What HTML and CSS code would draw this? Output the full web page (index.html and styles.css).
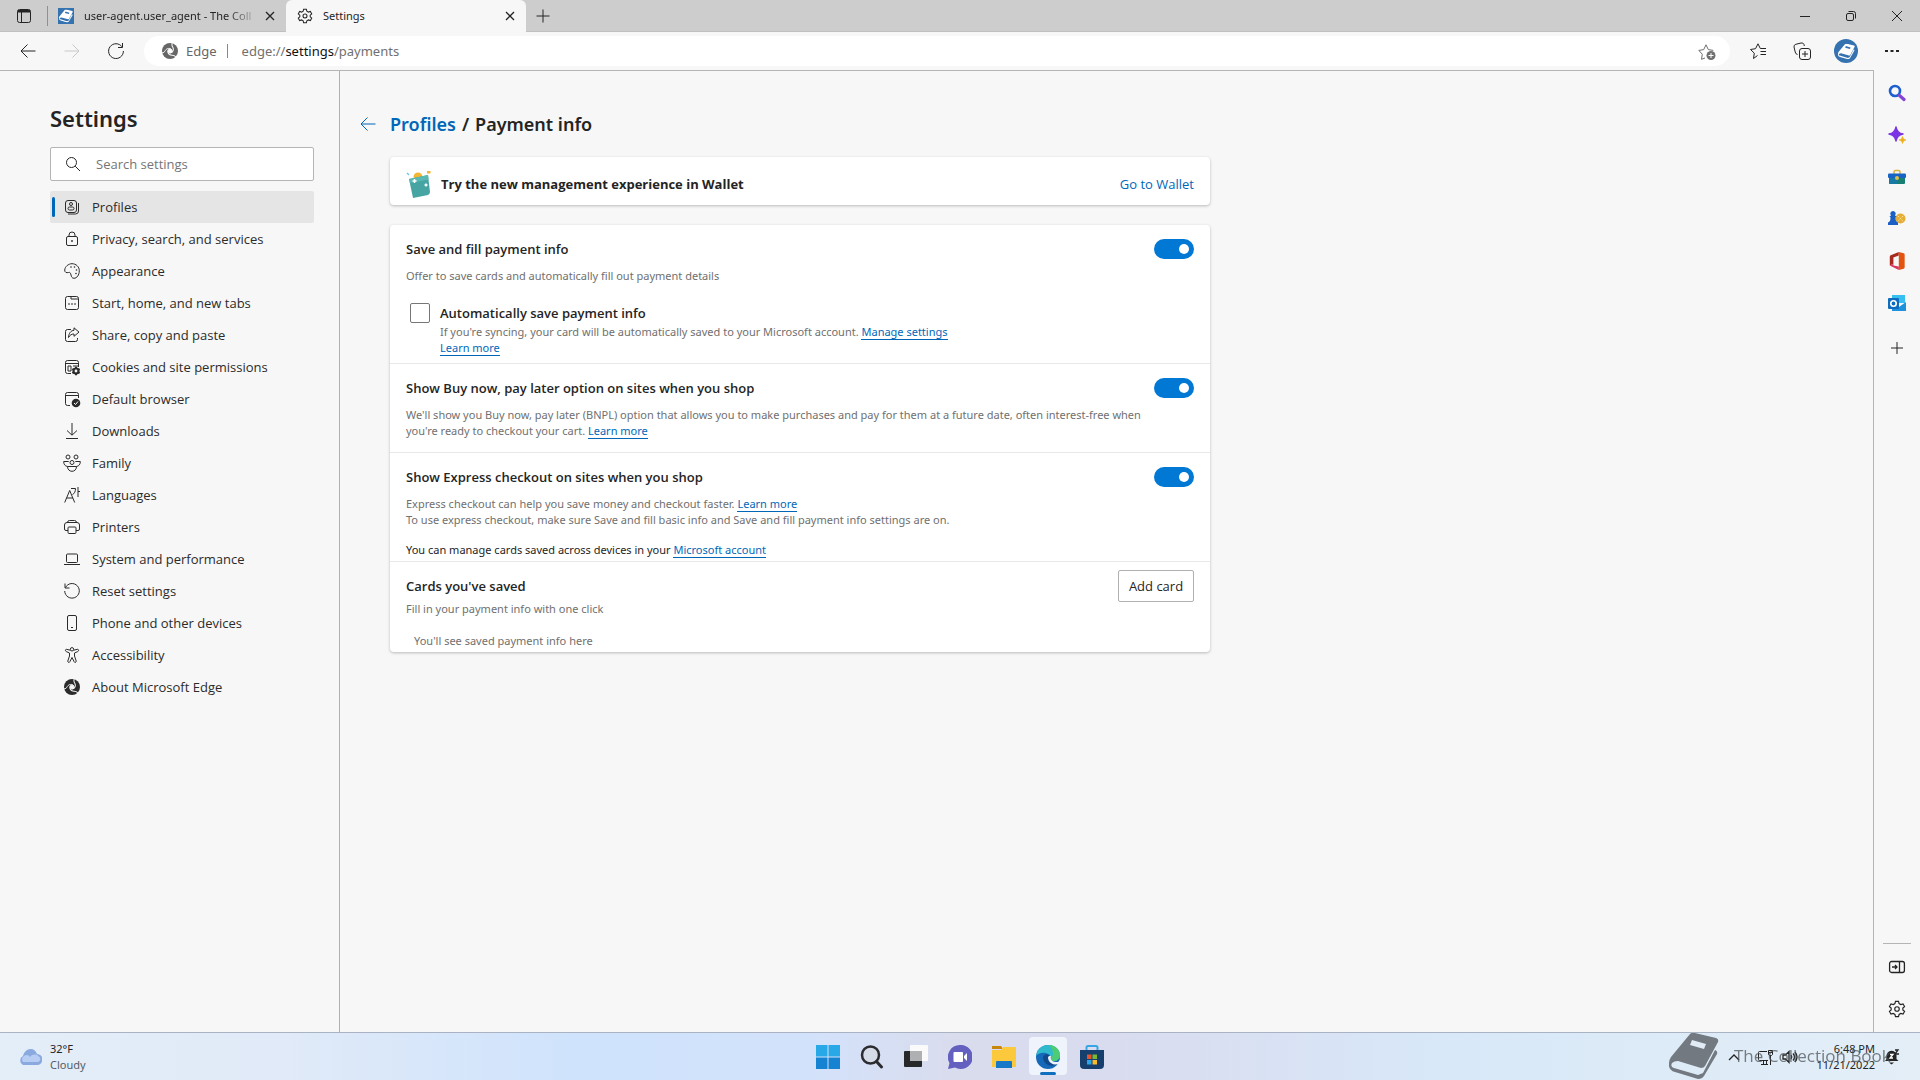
FILE: index.html
```html
<!DOCTYPE html>
<html lang="en">
<head>
<meta charset="utf-8">
<title>Settings</title>
<link rel="stylesheet" href="styles.css">
</head>
<body>
<svg class="defs" aria-hidden="true">
  <defs>
    <symbol id="i-close" viewBox="0 0 16 16"><path d="M4 4l8 8M12 4l-8 8"/></symbol>
    <symbol id="i-plus" viewBox="0 0 16 16"><path d="M8 1.500v13M1.500 8h13"/></symbol>
    <symbol id="i-back" viewBox="0 0 16 16"><path d="M15.500 8H1M7.500 1.500L1 8l6.500 6.500"/></symbol>
    <symbol id="i-search" viewBox="0 0 16 16"><circle cx="6.500" cy="6.500" r="5"/><path d="M10.200 10.200L15 15"/></symbol>
    <symbol id="i-gear" viewBox="0 0 20 20"><path d="M8.300 1.500h3.400l.6 2.500 1.900 1.100 2.500-.8 1.700 3-1.900 1.700v2l1.900 1.700-1.700 3-2.500-.8-1.900 1.100-.6 2.500H8.300l-.6-2.500-1.900-1.100-2.500.8-1.700-3L3.500 11V9L1.600 7.300l1.700-3 2.500.8L7.700 4z"/><circle cx="10" cy="10" r="2.500"/></symbol>
    <symbol id="i-edge" viewBox="0 0 16 16"><circle class="fill" cx="8" cy="8" r="8"/><g class="cut"><circle cx="8" cy="8" r="2"/><path d="M9.600 6.600C8 4.800 5 5 3.400 7.400 2.600 9 1.500 9.800 0 10"/><path d="M9.600 6.600C8 4.800 5 5 3.400 7.400 2.600 9 1.500 9.800 0 10" transform="rotate(120 8 8)"/><path d="M9.600 6.600C8 4.800 5 5 3.400 7.400 2.600 9 1.500 9.800 0 10" transform="rotate(240 8 8)"/></g></symbol>
    <symbol id="i-book" viewBox="0 0 50 46"><path class="fill" d="M21 1q2-2 5-1l21 5q3 1 2 4L36 33q-1 2-4 2L9 28q-4 0-6 2-2 4 2 5l24 7 5-2 12-23q3 1 2 4L35 43q-2 3-6 3L6 39q-7-2-6-9 0-3 2-6z"/><path class="label" d="M23 7l14 4-2 5-14-4z"/></symbol>
  </defs>
</svg>

<header class="tabstrip">
  <button class="tab-actions" aria-label="Tab actions"><svg class="ico" viewBox="0 0 16 16"><rect x="1.500" y="1.500" width="13" height="13" rx="2"/><path d="M1.500 4h13M5.500 4v10.500" /><path d="M2 3h12" class="thick"/></svg></button>
  <div class="tab">
    <span class="favicon"><svg viewBox="0 0 50 46"><use href="#i-book"/></svg></span>
    <span class="tab-title fade">user-agent.user_agent - The Coll</span>
    <button class="tab-close" aria-label="Close tab"><svg class="ico dark"><use href="#i-close"/></svg></button>
  </div>
  <div class="tab active">
    <svg class="ico dark"><use href="#i-gear"/></svg>
    <span class="tab-title">Settings</span>
    <button class="tab-close" aria-label="Close tab"><svg class="ico dark"><use href="#i-close"/></svg></button>
  </div>
  <button class="new-tab" aria-label="New tab"><svg class="ico"><use href="#i-plus"/></svg></button>
  <div class="window-buttons">
    <button aria-label="Minimize"><svg class="ico" viewBox="0 0 16 16"><path d="M3 8.500h10"/></svg></button>
    <button aria-label="Restore"><svg class="ico" viewBox="0 0 16 16"><rect x="3.500" y="5.500" width="7" height="7" rx="1.500"/><path d="M5.500 3.500h5a2 2 0 0 1 2 2v5"/></svg></button>
    <button aria-label="Close"><svg class="ico" viewBox="0 0 16 16"><path d="M3 3l10 10M13 3L3 13"/></svg></button>
  </div>
</header>

<nav class="toolbar" aria-label="Browser toolbar">
  <button aria-label="Back"><svg class="ico"><use href="#i-back"/></svg></button>
  <button aria-label="Forward" disabled><svg class="ico flip"><use href="#i-back"/></svg></button>
  <button aria-label="Refresh"><svg class="ico large" viewBox="0 0 18 18"><path d="M15 4.800A7.400 7.400 0 1 0 16.400 9M15.500 1v4.500H11"/></svg></button>
  <div class="omnibox">
    <svg class="ico edge"><use href="#i-edge"/></svg>
    <span class="site">Edge</span>
    <span class="url">edge://<b>settings</b>/payments</span>
    <button aria-label="Add to favorites"><svg class="ico large soft" viewBox="0 0 18 18"><path d="M7 16l-3.500 1.300.8-5L.8 8.400l4.900-.8L8 2.800l2.300 4.800 5 .8"/><circle cx="13" cy="13.500" r="4.500" class="fill"/><path class="white" d="M13 11v5M10.500 13.500h5"/></svg></button>
  </div>
  <button aria-label="Favorites"><svg class="ico large" viewBox="0 0 18 18"><path d="M8.500 13.500l-4 3 .8-5.300L1.500 7.500l5-.8L9 1.800l2.300 4.700H17M11.500 9.500H17M11.500 12.500H17"/></svg></button>
  <button aria-label="Collections"><svg class="ico large" viewBox="0 0 18 18"><path d="M4.500 12.500A3 3 0 0 1 2.200 10L1 5a2.500 2.500 0 0 1 1.800-2.700L8 1a2.500 2.500 0 0 1 3 1.500l.3 1.500"/><rect x="6.500" y="6.500" width="11" height="11" rx="2.500"/><path d="M12 9v6M9 12h6"/></svg></button>
  <button class="avatar" aria-label="Profile"><svg viewBox="0 0 50 46"><use href="#i-book"/></svg></button>
  <button aria-label="Settings and more"><svg class="ico" viewBox="0 0 16 16"><path class="fill" d="M1 7h3v2H1zM6.500 7h3v2h-3zM12 7h3v2h-3z"/></svg></button>
</nav>

<div class="workspace">
  <div class="page">
    <aside class="nav">
      <h1>Settings</h1>
      <label class="searchbox"><svg class="ico"><use href="#i-search"/></svg><input type="text" placeholder="Search settings" aria-label="Search settings"></label>
      <ul>
        <li><a class="current" href="#profiles"><svg class="ico" viewBox="0 0 16 16"><rect x="1.500" y="1.500" width="11" height="12" rx="2.500"/><circle cx="7" cy="5" r="1.500"/><rect x="4" y="8" width="6" height="3" rx="1.500"/><path d="M14.500 4v8a3 3 0 0 1-3 3H4"/></svg>Profiles</a></li>
        <li><a href="#privacy"><svg class="ico" viewBox="0 0 16 16"><rect x="2.500" y="5.500" width="11" height="9" rx="1.500"/><path d="M5 5.500V4a3 3 0 0 1 6 0v1.500"/><circle cx="8" cy="10" r=".6"/></svg>Privacy, search, and services</a></li>
        <li><a href="#appearance"><svg class="ico" viewBox="0 0 16 16"><path d="M.7 7C1 3.500 4.500.7 8 .7c4 0 7.300 3 7.300 7 0 4.300-2.500 7.600-5.300 7.600-2 0-2.500-1.500-3-3.300-.4-2-1-3-2.500-2.500C2.500 10 .7 9.500.7 7z"/><g class="fill"><circle cx="7" cy="4" r=".8"/><circle cx="10.500" cy="4" r=".8"/><circle cx="12.500" cy="7" r=".8"/><circle cx="12" cy="10.500" r=".8"/></g></svg>Appearance</a></li>
        <li><a href="#start"><svg class="ico" viewBox="0 0 16 16"><rect x="1.500" y="1.500" width="13" height="13" rx="2"/><path d="M7 1.500V4h7.500M4 9h2M7 9h2M10 9h2"/></svg>Start, home, and new tabs</a></li>
        <li><a href="#share"><svg class="ico" viewBox="0 0 16 16"><path d="M7 2.500H3.500a2 2 0 0 0-2 2v8a2 2 0 0 0 2 2h8a2 2 0 0 0 2-2V11M10 .8l5 4.300-5 4.200V7C7.500 7 6 8 4.500 10.500 4.800 6 7 3.500 10 3.300z"/></svg>Share, copy and paste</a></li>
        <li><a href="#cookies"><svg class="ico" viewBox="0 0 16 16"><path d="M7 14.500H3.500a2 2 0 0 1-2-2v-9a2 2 0 0 1 2-2h9a2 2 0 0 1 2 2V8M1.500 4.500h13M4 7h3v5H4zM9 7h5"/><circle cx="12" cy="12" r="2.500" stroke-width="2.200"/><path d="M12 7.800v8.400M8.400 9.900l7.200 4.200M15.600 9.900l-7.200 4.200" stroke-dasharray="1.600 5.200" stroke-width="2"/></svg>Cookies and site permissions</a></li>
        <li><a href="#default"><svg class="ico" viewBox="0 0 16 16"><path d="M6 14.500H3.500a2 2 0 0 1-2-2v-9a2 2 0 0 1 2-2h9a2 2 0 0 1 2 2V7M1.500 4.500h13"/><circle class="fill" cx="12" cy="12" r="4.300"/><path class="white" d="M10 12l1.500 1.500 2.500-3"/></svg>Default browser</a></li>
        <li><a href="#downloads"><svg class="ico" viewBox="0 0 16 16"><path d="M8 0v12M3 7.500L8 12.200l5-4.700M2 15.500h12"/></svg>Downloads</a></li>
        <li><a href="#family"><svg class="ico wide" viewBox="0 0 18 18"><circle cx="5" cy="3" r="2"/><circle cx="13" cy="3" r="2"/><circle cx="9" cy="8.500" r="2"/><path d="M4.500 12.500C2 12 .7 10.500.7 7.500h5M13.500 12.500c2.500-.5 3.800-2 3.800-5h-5M4.500 12.500h9c0 3-2 4.800-4.500 4.800s-4.500-1.800-4.500-4.800z"/></svg>Family</a></li>
        <li><a href="#languages"><svg class="ico" viewBox="0 0 16 16"><path d="M.7 15.500l5-12 5 12M2.500 11h6.500M7 1.500h4.500c0 3-1 5-3 6M14 0v10M14 4.500h2"/></svg>Languages</a></li>
        <li><a href="#printers"><svg class="ico" viewBox="0 0 16 16"><path d="M4 11.500H2a1.500 1.500 0 0 1-1.500-1.500V6A2.500 2.500 0 0 1 3 3.500h10A2.500 2.500 0 0 1 15.500 6v4a1.500 1.500 0 0 1-1.500 1.500h-2M3.500 3.500A2 2 0 0 1 5.500 1.500h5a2 2 0 0 1 2 2"/><rect x="4" y="8" width="8" height="6.500" rx="1"/></svg>Printers</a></li>
        <li><a href="#system"><svg class="ico" viewBox="0 0 16 16"><rect x="2.500" y="3" width="11" height="8.500" rx="1"/><path d="M0 13.500h16"/></svg>System and performance</a></li>
        <li><a href="#reset"><svg class="ico" viewBox="0 0 16 16"><path d="M1 .5v4.500h4.500M1.500 4.500A7.300 7.300 0 1 1 .7 8"/></svg>Reset settings</a></li>
        <li><a href="#phone"><svg class="ico" viewBox="0 0 16 16"><rect x="3.500" y=".5" width="9" height="15" rx="1.500"/><path d="M7 12.500h2"/></svg>Phone and other devices</a></li>
        <li><a href="#accessibility"><svg class="ico" viewBox="0 0 16 16"><circle cx="8" cy="2.300" r="1.700"/><path d="M6.300 3.200L2.500 2.300c-1.300 0-1.500 1.700-.3 2.200L5.500 6v3l-1.700 5c-.2 1.500 1.500 2 2 .8L8 10.500l2.200 4.300c.5 1.200 2.200.7 2-.8L10.500 9V6l3.300-1.500c1.200-.5 1-2.200-.3-2.200l-3.800.9"/></svg>Accessibility</a></li>
        <li><a href="#about"><svg class="ico edge"><use href="#i-edge"/></svg>About Microsoft Edge</a></li>
      </ul>
    </aside>
    <main class="content">
      <h2><a class="back" href="#profiles" aria-label="Back"><svg class="ico"><use href="#i-back"/></svg></a><a href="#profiles">Profiles</a><span class="slash">/</span>Payment info</h2>
      <section class="card wallet">
        <svg class="wallet-icon" viewBox="0 0 26 28"><circle cx="12" cy="7" r="4.500" fill="#f5b532"/><path d="M3 9l19-4 2 17q0 2-2 3l-15 3z" fill="#46a5a2"/><path d="M3 9l19-4 .5 4.500L4 13z" fill="#5bb9b3"/><path d="M8.500 9v4M6.500 11h4M20 13.500v3M18.500 15h3" stroke="#fff" stroke-width="1.500"/><path d="M1 3l2 2" stroke="#6fc5e8" stroke-width="1.500"/><path d="M21 1h3.500v2.500H21z" fill="#f5b532"/></svg>
        <strong>Try the new management experience in Wallet</strong>
        <a href="#wallet">Go to Wallet</a>
      </section>
      <section class="card main-card">
        <div class="row">
          <div class="head"><label for="save">Save and fill payment info</label><input class="toggle" id="save" type="checkbox" role="switch" checked></div>
          <p>Offer to save cards and automatically fill out payment details</p>
          <div class="option">
            <input id="auto" type="checkbox">
            <div>
              <label for="auto">Automatically save payment info</label>
              <p>If you're syncing, your card will be automatically saved to your Microsoft account. <a href="#manage">Manage settings</a><br><a href="#more">Learn more</a></p>
            </div>
          </div>
        </div>
        <div class="row bnpl">
          <div class="head"><label for="bnpl">Show Buy now, pay later option on sites when you shop</label><input class="toggle" id="bnpl" type="checkbox" role="switch" checked></div>
          <p>We'll show you Buy now, pay later (BNPL) option that allows you to make purchases and pay for them at a future date, often interest-free when<br>you're ready to checkout your cart. <a href="#more">Learn more</a></p>
        </div>
        <div class="row express">
          <div class="head"><label for="express">Show Express checkout on sites when you shop</label><input class="toggle" id="express" type="checkbox" role="switch" checked></div>
          <p>Express checkout can help you save money and checkout faster. <a href="#more">Learn more</a><br>To use express checkout, make sure Save and fill basic info and Save and fill payment info settings are on.</p>
          <p class="note">You can manage cards saved across devices in your <a href="#account">Microsoft account</a></p>
        </div>
        <div class="row saved">
          <div class="head"><h3>Cards you've saved</h3><button class="add">Add card</button></div>
          <p>Fill in your payment info with one click</p>
          <p class="empty">You'll see saved payment info here</p>
        </div>
      </section>
    </main>
  </div>
  <aside class="sidebar" aria-label="Sidebar">
    <button aria-label="Search"><svg class="app" viewBox="0 0 18 18"><circle cx="7" cy="7" r="5" fill="none" stroke="#1e5fd0" stroke-width="2.600"/><path d="M11.500 11.500l4.500 4" stroke="#8345d8" stroke-width="3.200" stroke-linecap="round"/></svg></button>
    <button aria-label="Discover"><svg class="app" viewBox="0 0 18 18"><path d="M8 1q1 6 7 7-6 1-7 7-1-6-7-7 6-1 7-7z" fill="#7b34e4" stroke="#7b34e4" stroke-width="1.500" stroke-linejoin="round"/><path d="M14.500 10.500l1 2.500 2.500 1-2.500 1-1 2.500-1-2.500-2.500-1 2.500-1z" fill="#eeae18" stroke="#eeae18" stroke-width=".6"/></svg></button>
    <button aria-label="Tools"><svg class="app" viewBox="0 0 18 18"><path d="M6 6V4q0-1.500 1.500-1.500h3Q12 2.500 12 4v2" fill="none" stroke="#d9b33a" stroke-width="1.500"/><rect x="1" y="6" width="16" height="10" rx="1" fill="#178072"/><path d="M1 6h8v10H2q-1 0-1-1z" fill="#1779a4"/><rect y="5.500" width="18" height="4.500" rx="1" fill="#1763c6"/><circle cx="9" cy="10" r="2" fill="#ddc04a"/></svg></button>
    <button aria-label="Games"><svg class="app" viewBox="0 0 18 18"><circle cx="12.500" cy="8.500" r="5" fill="#e4ae38"/><path d="M10 6l5 5M15 6l-5 5" stroke="#fbe49a" stroke-dasharray="1.500 1"/><path d="M5 1a2.700 2.700 0 0 1 2 4.500l1.500 1-1 1c0 3 .5 4 2.500 5V15H0v-2.500c2-1 2.500-2 2.500-5l-1-1 1.500-1A2.700 2.700 0 0 1 5 1z" fill="#1b5fc4"/></svg></button>
    <button aria-label="Office"><svg class="app" viewBox="0 0 18 20"><path d="M11 0L2 3.500Q1 4 1 5v10l4-2V6l6-2z" fill="#a82a1e"/><path d="M11 0l5.500 1.500Q17.500 2 17.500 3v14q0 1-1 1.500L11 20z" fill="#e2540f"/><path d="M1 15l4-2v2l6 1v4z" fill="#d6355e"/></svg></button>
    <button aria-label="Outlook"><svg class="app" viewBox="0 0 18 18"><path d="M4 1h13v8H4z" fill="#37bff1"/><path d="M4 8l7 5 7-5v9H4z" fill="#1e92dc"/><rect y="4" width="11" height="11" rx="1" fill="#0f6cbd"/><circle cx="5.500" cy="9.500" r="2.700" fill="none" stroke="#fff" stroke-width="1.600"/></svg></button>
    <button class="customize" aria-label="Customize"><svg class="ico" viewBox="0 0 16 16"><path d="M8 2v12M2 8h12"/></svg></button>
    <div class="sidebar-foot">
      <button aria-label="Hide sidebar"><svg class="ico dark" viewBox="0 0 16 16"><rect x=".6" y="2.500" width="14.800" height="11" rx="2"/><path d="M10.500 2.500v11M3 8h5M6 6l2 2-2 2"/></svg></button>
      <button aria-label="Sidebar settings"><svg class="ico large dark"><use href="#i-gear"/></svg></button>
    </div>
  </aside>
</div>

<footer class="taskbar">
  <div class="weather">
    <svg viewBox="0 0 24 16"><path d="M5 16a5 5 0 0 1 0-9C6 3 9 0 12.500 0 16 0 18 2 19 5a5.500 5.500 0 0 1 0 11z" fill="#8aa9df"/><path d="M5 13a4 4 0 0 1 1-6c2-2 5-1 6 1 2-3 7-3 8-1 3 1 3 5 0 6z" fill="#b7cdf3"/></svg>
    <div><div>32°F</div><div class="sky">Cloudy</div></div>
  </div>
  <div class="apps">
    <button aria-label="Start"><svg viewBox="0 0 24 24"><path d="M0 0h11.500v11.500H0zM12.500 0H24v11.500H12.500z" fill="#28a8e6"/><path d="M0 12.500h11.500V24H0zM12.500 12.500H24V24H12.500z" fill="#1583d2"/></svg></button>
    <button aria-label="Search"><svg viewBox="0 0 24 24"><circle cx="10.500" cy="10" r="8.500" fill="#d6dbe8" stroke="#2a2c30" stroke-width="2.500"/><path d="M16.500 16.500l5 5.500" stroke="#2a2c30" stroke-width="3" stroke-linecap="round"/></svg></button>
    <button aria-label="Task view"><svg viewBox="0 0 24 24"><rect x="6" width="18" height="16" rx="1" fill="#fafafa"/><rect y="6" width="18" height="16" rx="1" fill="#27282a"/><path d="M6 6h12v10H6z" fill="#aeb0b2"/></svg></button>
    <button aria-label="Chat"><svg viewBox="0 0 24 24"><path d="M12 0a12 12 0 1 1-5 22.500L0 24l1.500-6A12 12 0 0 1 12 0z" fill="#6460c0"/><rect x="5.500" y="7" width="9.500" height="10" rx="1" fill="#fff"/><path d="M16 11l3-3v8l-3-3z" fill="#fff"/></svg></button>
    <button aria-label="File Explorer"><svg viewBox="0 0 24 24"><path d="M0 1h9l2 3H0z" fill="#c8860b"/><path d="M0 5h9l2-3h12q1 0 1 1v19H0z" fill="#fcc93c"/><path d="M4 23v-6q0-1 1-1h14q1 0 1 1v6z" fill="#1878c8"/></svg></button>
    <button class="running" aria-label="Microsoft Edge"><svg viewBox="0 0 24 24"><circle cx="12" cy="12" r="12" fill="#1669b8"/><path d="M0 11C1 4 6 0 12 0c7 0 12 5 12 10 0 4-3 6-6 6-2 0-4-1-3-3C15 8 5 5 0 11z" fill="#2fb9cc"/><path d="M13 0c7 .5 11 5 11 10 0 4-3 6-6 6-2 0-4-1-3-3 3-2 3-8-2-13z" fill="#4dcb75"/><path d="M7 12c1-3 5-4 7-1-2 5 3 9 8 7-4 5-15 3-15-6z" fill="#104a8a"/><path d="M12 12q2-2 3-1c-1 4 1 6 7 6l2-2v3q-5 3-9 0-3-2-3-6z" fill="#eff3fb"/></svg></button>
    <button aria-label="Microsoft Store"><svg viewBox="0 0 24 24"><path d="M6.500 6V2.500q0-1.500 1.500-1.500h8q1.500 0 1.500 1.500V6" fill="none" stroke="#38a5e4" stroke-width="2"/><path d="M0 5h24v15q0 4-4 4H4q-4 0-4-4z" fill="#173f6d"/><path d="M7 9.500h4.500V14H7z" fill="#e5532b"/><path d="M12.500 9.500H17V14h-4.500z" fill="#7db72f"/><path d="M7 15h4.500v4.500H7z" fill="#2aa5e8"/><path d="M12.500 15H17v4.500h-4.500z" fill="#f8bd2c"/></svg></button>
  </div>
  <div class="tray">
    <svg class="ico dark" viewBox="0 0 16 16"><path d="M3 11l5-5 5 5"/></svg>
    <svg class="ico net" viewBox="0 0 16 16"><path d="M10 2.500H2.500a1 1 0 0 0-1 1v7a1 1 0 0 0 1 1H11M4 15.500h7M6.500 11.500v4M9.500 11.500v4M13.500 7v9M11.500 1.500h4v4l-1 1h-2l-1-1zM11.500 3.500h4"/></svg>
    <svg class="ico dark" viewBox="0 0 16 16"><path d="M1 6h2.500L7 2.500v11L3.500 10H1zM9 6q1.500 2 0 4M11 4.500q3 3.500 0 7M13 3q4 5 0 10"/></svg>
    <div class="clock"><div>6:48 PM</div><div>11/21/2022</div></div>
    <svg class="ico dark" viewBox="0 0 16 16"><path class="fill" d="M1 12l1.500-2V7a5 5 0 0 1 10-.5V10l2 2zM5 13.500h5l-2.500 2z"/><path d="M11 1h3l-3 4h4" /><path class="white" d="M6 5.500h3L6 9h3"/></svg>
  </div>
  <div class="watermark" aria-hidden="true"><svg viewBox="0 0 50 46"><use href="#i-book"/></svg><span>The Collection Book</span></div>
</footer>
</body>
</html>
```
FILE: styles.css
```css
* { box-sizing: border-box; }
body {
  margin: 0;
  min-height: 100vh;
  display: flex;
  flex-direction: column;
  background: #f7f7f7;
  color: #242424;
  font: 13px/20px "Open Sans", "Noto Sans", sans-serif;
}
h1, h2, h3, p, ul { margin: 0; padding: 0; }
ul { list-style: none; }
a { color: #0067b8; text-decoration: none; }
button {
  display: flex;
  align-items: center;
  justify-content: center;
  padding: 0;
  border: 0;
  background: none;
  color: inherit;
  font: inherit;
}
.tabstrip, .omnibox, .nav h1, .content h2, .row p, .taskbar { font-family: "Noto Sans", "Open Sans", sans-serif; }
.defs { position: absolute; width: 0; height: 0; }
.ico {
  flex: none;
  width: 16px;
  height: 16px;
  fill: none;
  stroke: currentColor;
  stroke-width: 1;
  overflow: visible;
}
.ico.large, .ico.wide { width: 18px; height: 18px; }
.ico.wide { margin: 0 -1px; }
.dark { stroke-width: 1.3; }
.flip { transform: scaleX(-1); }
.fill { fill: currentColor; stroke: none; }
.white { stroke: #fff; }
.thick { stroke-width: 2; }
.label { fill: var(--label, #e3ecf6); }
.cut { fill: var(--cut, #f7f7f7); stroke: var(--cut, #f7f7f7); }
.cut path { fill: none; }

/* Tabs */
.tabstrip { display: flex; height: 32px; background: #cdcdcd; box-shadow: inset 0 -1px #c0c0c0; font-size: 11px; }
.tab-actions { width: 47px; }
.tab { display: flex; align-items: center; gap: 10px; width: 239px; padding: 0 7px 0 10px; border-left: 1px solid #909090; border-image: linear-gradient(transparent 20%, #909090 20%, #909090 80%, transparent 80%) 1; }
.tab.active { width: 240px; padding-left: 11px; border: 0; border-radius: 6px 6px 0 0; background: #f7f7f7; }
.tab-title { flex: 1; overflow: hidden; white-space: nowrap; }
.fade { -webkit-mask-image: linear-gradient(90deg, #000 85%, transparent 105%); mask-image: linear-gradient(90deg, #000 85%, transparent 105%); }
.favicon { display: grid; place-items: center; width: 16px; height: 16px; background: #3572b0; color: #fff; }
.favicon svg { width: 14px; height: 14px; }
.favicon, .avatar { --label: #3572b0; }
.tab-close { width: 18px; height: 18px; }
.new-tab { width: 34px; }
.window-buttons { display: flex; margin-left: auto; }
.window-buttons button { width: 46px; }

/* Toolbar */
.toolbar { display: flex; align-items: center; height: 38px; padding: 0 6px; }
.toolbar > button { width: 44px; height: 30px; }
.toolbar button:disabled { color: #c8c8c8; }
.omnibox { flex: 1; display: flex; align-items: center; height: 30px; margin: 0 6px; padding: 0 14px 0 18px; border-radius: 15px; background: #fff; --cut: #fff; color: #666; }
.omnibox .site { margin-left: 8px; padding-right: 10px; border-right: 1px solid #888; line-height: 14px; }
.omnibox .url { flex: 1; margin-left: 14px; color: #707070; }
.omnibox b { color: #111; font-weight: 400; }
.soft { color: #707070; }
.toolbar .avatar { width: 24px; height: 24px; margin: 0 12px 0 10px; border-radius: 50%; background: #3572b0; color: #fff; }
.avatar svg { width: 17px; height: 17px; }

/* Page */
.workspace { flex: 1; display: flex; }
.page { flex: 1; display: flex; border: solid #b5b5b5; border-width: 1px 1px 0 0; }
.nav { flex: none; width: 340px; padding: 33px 25px 20px 50px; border-right: 1px solid #b0b0b0; }
.nav h1 { font-size: 22px; line-height: 28px; font-weight: 600; }
.searchbox { display: flex; align-items: center; gap: 15px; height: 34px; margin: 15px 0 10px; padding: 0 14px; border: 1px solid #b5b5b5; border-radius: 2px; background: #fff; }
.searchbox input { flex: 1; min-width: 0; padding: 0; border: 0; outline: 0; background: none; font: inherit; }
.searchbox input::placeholder { color: #757575; }
.nav li a { position: relative; display: flex; align-items: center; gap: 12px; height: 32px; padding-left: 14px; border-radius: 2px; color: #2b2b2b; }
.nav li a.current { background: #e5e5e5; }
.current::before { content: ""; position: absolute; left: 2px; top: 6px; bottom: 6px; width: 3px; border-radius: 2px; background: #0067b8; }

.content { flex: 1; padding: 39px 50px 20px; }
.content h2 { display: flex; align-items: center; max-width: 820px; font-size: 18px; line-height: 28px; font-weight: 600; }
.back { display: flex; width: 30px; margin-left: -30px; }
.slash { margin: 0 6px; }
.card { max-width: 820px; margin-top: 19px; border-radius: 4px; background: #fff; box-shadow: 0 1px 3px rgba(0, 0, 0, .25); }
.card.main-card { margin-top: 20px; }
.wallet { display: flex; align-items: center; height: 48px; padding: 6px 16px 0; }
.wallet-icon { width: 26px; height: 28px; margin-right: 9px; }
.wallet a { margin-left: auto; }
.row { padding: 14px 16px 7px; border-bottom: 1px solid #e8e8e8; }
.row:last-child { border: 0; }
.head { display: flex; align-items: center; justify-content: space-between; height: 20px; }
.head label, .head h3, .option label { font-size: 13px; font-weight: 600; line-height: 20px; }
.row p { margin-top: 9px; color: #707070; font-size: 11px; line-height: 16px; }
.row p a { border-bottom: 1px solid #0067b8; }
.option { display: flex; gap: 10px; margin: 19px 0 0 4px; }
.option input { appearance: none; width: 20px; height: 20px; margin: 0; border: 1px solid #767676; border-radius: 2px; }
.option label { display: block; }
.option p { margin: 1px 0 0; }
.row.bnpl { padding-bottom: 13px; }
.row p.note { margin-top: 14px; color: #242424; }
.row.express, .row.saved { padding-bottom: 3px; }
.row.saved p { margin-top: 5px; }
.row.saved p.empty { margin: 16px 0 0 8px; }
.toggle { appearance: none; display: flex; justify-content: flex-end; align-items: center; width: 40px; height: 20px; margin: 0; padding: 0 5px; border-radius: 10px; background: #0078d4; }
.toggle::before { content: ""; width: 10px; height: 10px; border-radius: 50%; background: #fff; }
.add { width: 76px; height: 32px; border: 1px solid #b0b0b0; border-radius: 2px; background: #fff; }

/* Sidebar */
.sidebar { flex: none; display: flex; flex-direction: column; align-items: center; width: 46px; padding: 2px 0; }
.sidebar button { width: 42px; height: 42px; }
.app { width: 18px; height: 18px; }
.sidebar .customize { height: 48px; }
.sidebar-foot { margin-top: auto; border-top: 1px solid #b5b5b5; width: 28px; display: flex; flex-direction: column; align-items: center; padding-top: 2px; }

/* Taskbar */
.taskbar { position: relative; display: grid; grid-template-columns: 1fr auto 1fr; align-items: center; height: 48px; border-top: 1px solid #aab3c4; background: linear-gradient(90deg, #e4eef8 0, #e0eaf8 15%, #cfe3fc 30%, #d3e2fb 42%, #d9dced 50%, #d9dcef 58%, #d8e8f8 75%, #e3eef7 100%); font-size: 11px; line-height: 16px; }
.weather { display: flex; align-items: center; gap: 8px; padding-left: 18px; }
.weather svg { width: 24px; height: 16px; }
.sky { color: #555c66; }
.apps { display: flex; }
.apps button { position: relative; width: 44px; height: 47px; }
.apps svg { position: relative; width: 24px; height: 24px; }
.running::before { content: ""; position: absolute; inset: 4px 3px 5px; border-radius: 4px; background: #eff3fb; }
.running::after { content: ""; position: absolute; left: 14px; bottom: 5px; width: 16px; height: 3px; border-radius: 2px; background: #1070c0; }
.tray { display: flex; align-items: center; justify-content: flex-end; gap: 9px; padding-right: 20px; }
.net { margin-left: 6px; }
.clock { width: 68px; text-align: right; white-space: nowrap; }
.watermark { position: absolute; right: 20px; top: 0; display: flex; align-items: center; gap: 15px; height: 46px; color: #4f5459; opacity: .75; font: 17px/20px "Open Sans", sans-serif; pointer-events: none; }
.watermark svg { width: 50px; height: 46px; }
.watermark span { width: 166px; white-space: nowrap; }
```
